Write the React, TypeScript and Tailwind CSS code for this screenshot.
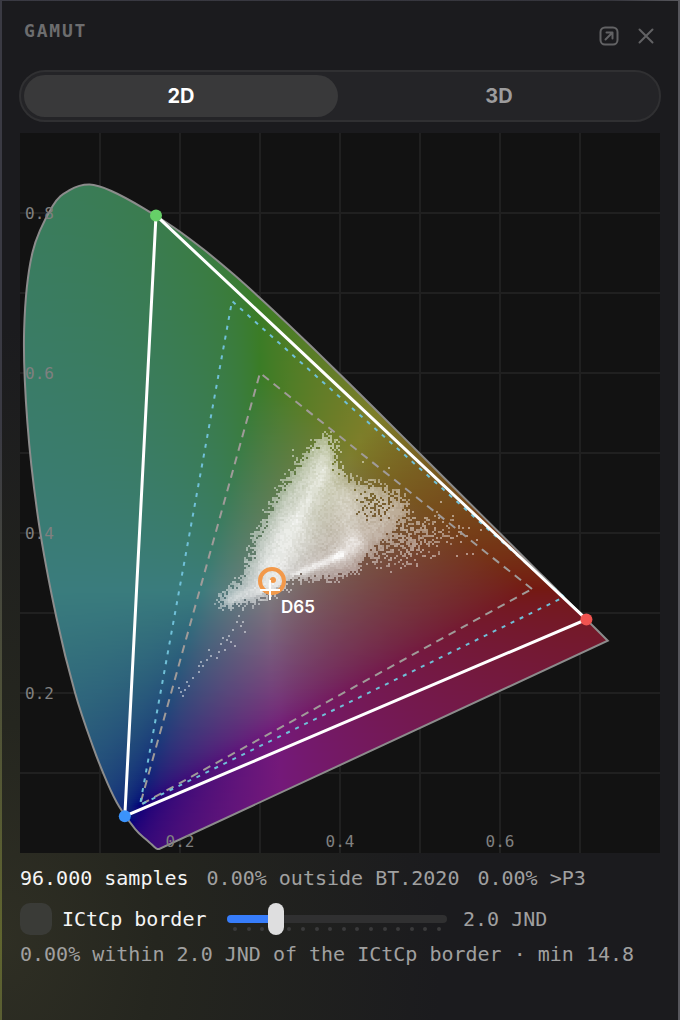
import { useId, useState } from "react";

type Point = [number, number];
type View = "2D" | "3D";

const SCALE = 800;
const PLOT_WIDTH = 640;
const PLOT_HEIGHT = 720;
const CELL = 2;

// CIE 1931 spectral locus, from violet to deep red
const LOCUS: Point[] = [
  [0.1741, 0.005],
  [0.1714, 0.0051],
  [0.1689, 0.0069],
  [0.1644, 0.0109],
  [0.1566, 0.0177],
  [0.144, 0.0297],
  [0.1241, 0.0578],
  [0.1096, 0.0868],
  [0.0913, 0.1327],
  [0.0687, 0.2007],
  [0.0454, 0.295],
  [0.0235, 0.4127],
  [0.0092, 0.5384],
  [0.0052, 0.6548],
  [0.0155, 0.7502],
  [0.041, 0.809],
  [0.062, 0.8285],
  [0.087, 0.8355],
  [0.1142, 0.8275],
  [0.1547, 0.8059],
  [0.1929, 0.7816],
  [0.2296, 0.7543],
  [0.2658, 0.7243],
  [0.3016, 0.6923],
  [0.3373, 0.6589],
  [0.3731, 0.6245],
  [0.4087, 0.5896],
  [0.4441, 0.5547],
  [0.4788, 0.5202],
  [0.5125, 0.4866],
  [0.5448, 0.4544],
  [0.5752, 0.4242],
  [0.6029, 0.3965],
  [0.627, 0.3725],
  [0.6482, 0.3514],
  [0.6658, 0.334],
  [0.6915, 0.3083],
  [0.7079, 0.292],
  [0.7347, 0.2653],
];

const BT2020: Point[] = [[0.708, 0.292], [0.17, 0.797], [0.131, 0.046]];
const P3: Point[] = [[0.68, 0.32], [0.265, 0.69], [0.15, 0.06]];
const REC709: Point[] = [[0.64, 0.33], [0.3, 0.6], [0.15, 0.06]];
const PRIMARY_COLORS = ["#ef5350", "#66d068", "#3b93fb"];

const px = (x: number) => x * SCALE;
const py = (y: number) => PLOT_HEIGHT - y * SCALE;
const toPlot = ([x, y]: Point): Point => [px(x), py(y)];
const polygon = (pts: Point[]) => pts.map((p) => toPlot(p).join(",")).join(" ");

// Catmull-Rom through the locus points, closed by the line of purples
const locusPath = () => {
  const pts = LOCUS.map(toPlot);
  let d = `M${pts[0].join(" ")}`;
  for (let i = 0; i < pts.length - 1; i++) {
    const a = pts[Math.max(i - 1, 0)];
    const b = pts[i];
    const c = pts[i + 1];
    const e = pts[Math.min(i + 2, pts.length - 1)];
    d += `C${b[0] + (c[0] - a[0]) / 6} ${b[1] + (c[1] - a[1]) / 6} ${c[0] - (e[0] - b[0]) / 6} ${c[1] - (e[1] - b[1]) / 6} ${c[0]} ${c[1]}`;
  }
  return `${d}Z`;
};

const encode = (v: number) => (v <= 0.0031308 ? 12.92 * v : 1.055 * v ** (1 / 2.4) - 0.055);

// Out-of-gamut colours are desaturated until no channel is negative
const chromaColor = (x: number, y: number) => {
  const yy = Math.max(y, 0.001);
  const X = x / yy;
  const Z = (1 - x - yy) / yy;
  const rgb = [
    3.2406 * X - 1.5372 - 0.4986 * Z,
    -0.9689 * X + 1.8758 + 0.0415 * Z,
    0.0557 * X - 0.204 + 1.057 * Z,
  ];
  const lift = Math.min(0, ...rgb);
  const max = Math.max(...rgb) - lift;
  const [r, g, b] = rgb.map((v) => (v - lift) / max);
  const wide = [0.8225 * r + 0.1774 * g, 0.0332 * r + 0.9669 * g, 0.0171 * r + 0.0724 * g + 0.9108 * b];
  return `rgb(${wide.map((v) => Math.round(encode(v) * 126)).join(",")})`;
};

const FIELD_ROWS = Array.from({ length: PLOT_HEIGHT / CELL }, (_, i) => {
  const top = i * CELL;
  const y = (PLOT_HEIGHT - top - CELL / 2) / SCALE;
  return {
    top,
    stops: Array.from({ length: 61 }, (_, k) => ({ offset: k / 60, color: chromaColor((k * 10) / SCALE, y) })),
  };
});

// Outline of the dense part of the sample cloud, in plot units
const CLOUD: Point[] = [
  [305, 300], [313, 312], [315, 328], [322, 342], [338, 348], [358, 350], [372, 358], [384, 366],
  [386, 378], [380, 390], [372, 402], [358, 414], [346, 426], [334, 436], [320, 442], [306, 446],
  [290, 445], [276, 445], [260, 456], [242, 464], [222, 470], [206, 474], [200, 468], [208, 456],
  [220, 444], [228, 424], [236, 402], [246, 380], [258, 356], [274, 334], [286, 318], [296, 308],
];

// Streaks: from, to, half width, strength
const STREAKS: [Point, Point, number, number][] = [
  [[252, 430], [306, 324], 18, 0.14],
  [[276, 386], [304, 336], 6, 0.1],
  [[250, 446], [270, 400], 20, 0.14],
  [[274, 441], [320, 421], 4, 0.3],
  [[320, 421], [334, 408], 9, 0.16],
  [[212, 466], [258, 450], 7, 0.18],
  [[330, 408], [324, 366], 12, 0.1],
];

// Loose pixels trailing towards blue and orange
const STRAYS: Point[] = [
  [218, 482], [216, 488], [220, 492], [222, 488], [212, 496], [208, 502], [210, 508], [206, 506],
  [200, 510], [198, 518], [204, 516], [188, 516], [190, 522], [186, 526], [180, 528], [178, 532],
  [182, 532], [178, 538], [196, 524], [172, 544], [166, 548], [168, 552], [164, 556], [160, 558],
  [162, 562], [158, 554], [224, 498], [214, 512], [202, 504], [292, 316], [272, 316], [272, 322],
  [368, 334], [342, 328], [420, 368], [432, 382], [438, 392], [446, 402], [460, 396], [456, 406],
  [452, 420], [446, 420], [436, 422], [448, 394], [440, 408], [430, 404],
];

const noise = (x: number, y: number) => {
  let h = Math.imul(x, 374761393) + Math.imul(y, 668265263);
  h = Math.imul(h ^ (h >>> 13), 1274126177);
  return ((h ^ (h >>> 16)) >>> 0) / 4294967296;
};

const segmentDistance = (x: number, y: number, [ax, ay]: Point, [bx, by]: Point) => {
  const dx = bx - ax;
  const dy = by - ay;
  const t = Math.min(1, Math.max(0, ((x - ax) * dx + (y - ay) * dy) / (dx * dx + dy * dy)));
  return Math.hypot(x - ax - t * dx, y - ay - t * dy);
};

const cloudDepth = (x: number, y: number) => {
  let inside = false;
  let dist = Infinity;
  CLOUD.forEach((a, i) => {
    const b = CLOUD[(i + 1) % CLOUD.length];
    dist = Math.min(dist, segmentDistance(x, y, a, b));
    if (a[1] > y !== b[1] > y && x < ((b[0] - a[0]) * (y - a[1])) / (b[1] - a[1]) + a[0]) inside = !inside;
  });
  return inside ? dist : -dist;
};

const buildSamples = () => {
  const layers: string[] = Array(13).fill("");
  const put = (x: number, y: number, alpha: number) => {
    const level = Math.min(12, Math.max(0, Math.round((alpha - 0.36) / 0.05)));
    layers[level] += `M${x} ${y}h2v2h-2z`;
  };
  for (let y = 290; y < 490; y += CELL) {
    for (let x = 190; x < 470; x += CELL) {
      const depth = cloudDepth(x, y);
      const n = noise(x, y);
      const gap = Math.hypot((x - 356) / 26, (y - 366) / 22);
      let chance = depth > 0 ? 0.6 + depth / 16 : 0.55 + depth / 13;
      if (gap < 1) chance = Math.min(chance, 0.6 + gap * 0.35);
      const tail = Math.hypot((x - 380) / 66, (y - 406 + (x - 380) * 0.12) / 32);
      if (depth <= 0 && x > 330 && y > 360) chance = Math.max(chance, 0.62 * (1 - tail));
      if (n > chance) continue;
      let alpha = 0.42 + Math.min(0.14, Math.max(0, depth) / 100);
      for (const [a, b, width, strength] of STREAKS) {
        const d = segmentDistance(x, y, a, b) / width;
        alpha += strength * Math.exp(-d * d);
      }
      if (depth < 4) alpha = Math.min(alpha, 0.52);
      put(x, y, alpha + (noise(y, x) - 0.5) * 0.1);
    }
  }
  STRAYS.forEach(([x, y]) => put(x, y, 0.44));
  return layers;
};

const SAMPLE_LAYERS = buildSamples();
const LOCUS_D = locusPath();

const ChromaticityPlot = () => {
  const id = useId();
  return (
    <svg
      viewBox={`0 0 ${PLOT_WIDTH} ${PLOT_HEIGHT}`}
      className="block w-full bg-[#121212]"
      role="img"
      aria-label="CIE 1931 chromaticity diagram"
    >
      <defs>
        <clipPath id={`${id}-locus`}>
          <path d={LOCUS_D} />
        </clipPath>
        {FIELD_ROWS.map((row) => (
          <linearGradient
            key={row.top}
            id={`${id}-row${row.top}`}
            gradientUnits="userSpaceOnUse"
            x1="0"
            x2="600"
            y1="0"
            y2="0"
          >
            {row.stops.map((s) => (
              <stop key={s.offset} offset={s.offset} stopColor={s.color} />
            ))}
          </linearGradient>
        ))}
      </defs>

      {/* Grid every 0.1 */}
      <g stroke="#202020" strokeWidth="2">
        {[1, 2, 3, 4, 5, 6, 7].map((i) => (
          <line key={i} x1={i * 80} x2={i * 80} y1="0" y2={PLOT_HEIGHT} />
        ))}
        {[1, 2, 3, 4, 5, 6, 7, 8].map((i) => (
          <line key={i} x1="0" x2={PLOT_WIDTH} y1={i * 80} y2={i * 80} />
        ))}
      </g>

      <g clipPath={`url(#${id}-locus)`} shapeRendering="crispEdges">
        {FIELD_ROWS.map((row) => (
          <rect key={row.top} x="0" y={row.top} width="600" height={CELL} fill={`url(#${id}-row${row.top})`} />
        ))}
      </g>
      <path d={LOCUS_D} fill="none" stroke="#8c8c8c" strokeWidth="2" />

      <g fill="#ffffff" shapeRendering="crispEdges">
        {SAMPLE_LAYERS.map((d, i) => (
          <path key={i} d={d} fillOpacity={0.36 + i * 0.05} />
        ))}
      </g>

      <g fill="none" strokeWidth="2">
        <polygon points={polygon(REC709)} stroke="#a09b99" strokeDasharray="8 6" />
        <polygon points={polygon(P3)} stroke="#70c0d8" strokeDasharray="4 6" />
        <polygon points={polygon(BT2020)} stroke="#ffffff" strokeWidth="3" />
      </g>
      {BT2020.map((p, i) => (
        <circle key={i} cx={px(p[0])} cy={py(p[1])} r="6" fill={PRIMARY_COLORS[i]} />
      ))}

      {/* Average of the samples and the D65 white point */}
      <circle cx="252" cy="448" r="12" fill="none" stroke="#f2994a" strokeWidth="4" />
      <circle cx="253" cy="447" r="3" fill="#f2994a" />
      <path d="M240 457h20M250 447v20" stroke="#ffffff" strokeWidth="2" />
      <text x="261" y="480" className="fill-white font-[Inter,sans-serif] text-[17px] font-semibold">
        D65
      </text>

      <g className="fill-[#808080] font-['DejaVu_Sans_Mono',monospace] text-[16px]">
        {[0.8, 0.6, 0.4, 0.2].map((v) => (
          <text key={v} x="5" y={py(v) + 6}>
            {v}
          </text>
        ))}
        {[0.2, 0.4, 0.6].map((v) => (
          <text key={v} x={px(v)} y="714" textAnchor="middle">
            {v}
          </text>
        ))}
      </g>
    </svg>
  );
};

interface ViewTabsProps {
  value: View;
  onChange: (view: View) => void;
}

const ViewTabs = ({ value, onChange }: ViewTabsProps) => (
  <div
    role="tablist"
    className="mx-[-1px] flex gap-1 rounded-full border-2 border-[#303032] bg-[#242427] p-[3px] font-[Inter,sans-serif] text-[20px]"
  >
    {(["2D", "3D"] as View[]).map((view) => (
      <button
        key={view}
        role="tab"
        aria-selected={value === view}
        onClick={() => onChange(view)}
        className={`h-[42px] flex-1 rounded-full font-bold ${value === view ? "bg-[#39393a] text-white" : "text-[#9c9c9d]"}`}
      >
        {view}
      </button>
    ))}
  </div>
);

interface BorderSliderProps {
  value: number;
  onChange: (value: number) => void;
}

const BorderSlider = ({ value, onChange }: BorderSliderProps) => (
  <div className="relative h-8 w-[220px]">
    <div className="absolute inset-x-0 top-3 h-2 overflow-hidden rounded-full bg-[#303031]">
      <div className="h-full bg-[#377dfb]" style={{ width: `${((value - 0.5) / 7.5) * 100}%` }} />
    </div>
    <div className="absolute inset-x-[6px] bottom-1 flex justify-between">
      {Array.from({ length: 16 }, (_, i) => (
        <span key={i} className="size-1 rounded-full bg-[#3a3a3b]" />
      ))}
    </div>
    <input
      type="range"
      aria-label="ICtCp border JND"
      min={0.5}
      max={8}
      step={0.5}
      value={value}
      onChange={(e) => onChange(Number(e.target.value))}
      className="relative block h-8 w-full appearance-none bg-transparent [&::-webkit-slider-thumb]:h-8 [&::-webkit-slider-thumb]:w-4 [&::-webkit-slider-thumb]:appearance-none [&::-webkit-slider-thumb]:rounded-full [&::-webkit-slider-thumb]:bg-[#dededf]"
    />
  </div>
);

export default function App() {
  const [view, setView] = useState<View>("2D");
  const [showBorder, setShowBorder] = useState(false);
  const [jnd, setJnd] = useState(2);

  return (
    <div className="flex min-h-screen bg-[radial-gradient(ellipse_20%_50%_at_0%_92%,#60652f_0%,transparent_100%),linear-gradient(to_right,#3a3a43,#35353c_90%,#57575d)] px-[2px] pt-px">
      <main className="flex-1 bg-[#1b1b1e] bg-[radial-gradient(ellipse_65%_60%_at_0%_92%,#2f2f24_0%,#25261f_35%,transparent_100%)] px-[18px] pb-12 font-['DejaVu_Sans_Mono',monospace] text-[20px] leading-7 text-[#a0a0a0]">
        <header className="flex h-[69px] items-start justify-between px-1 pt-4">
          <h1 className="text-[18px] leading-7 font-bold tracking-widest text-[#6d6d6e]">GAMUT</h1>
          <div className="flex gap-[17px] pt-[9px] text-[#626264]">
            <button aria-label="Open in window">
              <svg width="20" height="20" viewBox="0 0 20 20" fill="none" stroke="currentColor" strokeWidth="2" strokeLinecap="round" strokeLinejoin="round">
                <rect x="1.5" y="1.5" width="17" height="17" rx="4.5" />
                <path d="M6.5 13.5l6.5-6.5M7.5 6.5h6v6" />
              </svg>
            </button>
            <button aria-label="Close">
              <svg width="20" height="20" viewBox="0 0 20 20" fill="none" stroke="currentColor" strokeWidth="2" strokeLinecap="round">
                <path d="M3.5 3.5l13 13M16.5 3.5l-13 13" />
              </svg>
            </button>
          </div>
        </header>

        <ViewTabs value={view} onChange={setView} />

        <div className="mt-[11px]">
          <ChromaticityPlot />
        </div>

        <div className="mt-[11px] flex gap-[18px] whitespace-nowrap">
          <span className="text-[#f5f5f5]">96.000 samples</span>
          <span>0.00% outside BT.2020</span>
          <span>0.00% &gt;P3</span>
        </div>

        <div className="mt-[11px] flex items-center">
          <input
            id="border"
            type="checkbox"
            checked={showBorder}
            onChange={(e) => setShowBorder(e.target.checked)}
            className="size-8 appearance-none rounded-[10px] bg-[#3a3b37] checked:bg-[#377dfb]"
          />
          <label htmlFor="border" className="ml-[10px] w-[165px] text-[#f5f5f5]">
            ICtCp border
          </label>
          <BorderSlider value={jnd} onChange={setJnd} />
          <span className="ml-4">{jnd.toFixed(1)} JND</span>
        </div>

        <p className="mt-[5px] whitespace-nowrap">
          0.00% within {jnd.toFixed(1)} JND of the ICtCp border · min 14.8
        </p>
      </main>
    </div>
  );
}
